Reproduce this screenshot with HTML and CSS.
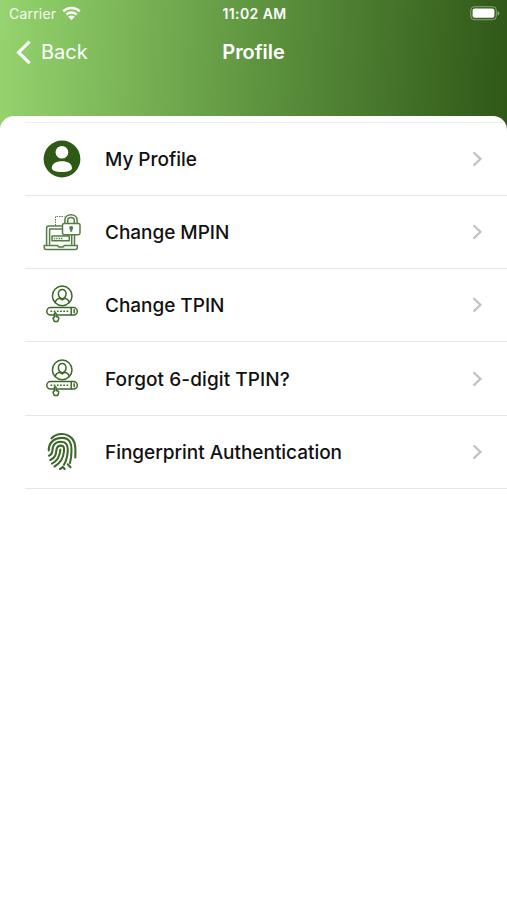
FILE: index.html
```html
<!DOCTYPE html>
<html lang="en">
<head>
<meta charset="utf-8">
<meta name="viewport" content="width=device-width, initial-scale=1">
<title>Profile</title>
<link rel="stylesheet" href="styles.css">
</head>
<body>
<svg width="0" height="0" class="defs" aria-hidden="true">
  <symbol id="tpin" viewBox="0 0 52 52">
    <g fill="none" stroke="currentColor" stroke-width="1.500" stroke-linecap="round" stroke-linejoin="round">
      <circle cx="26.200" cy="16.900" r="9.800"/>
      <path d="M22.400 15.500c-.8-6.600 8.400-6.600 7.600 0-.5 2.600-1.700 4.200-3.800 4.200s-3.300-1.600-3.800-4.200zM19.200 23.600c.4-2.500 2-3.700 4.600-4.300l2.400 1.600 2.400-1.600c2.600.6 4.200 1.800 4.600 4.300"/>
      <rect x="10.800" y="28.600" width="30.500" height="7.400" rx="3.700"/>
      <path d="M35.200 28.800v7M38.200 30.800v3"/>
      <path d="M18.300 42.600l-1.300-3.500 1.300-1v-3.300c0-1.300 1.800-1.300 1.800 0v2.700l1.800.5c.8.300 1 .9.800 1.700l-1 2.900z" fill="#fff"/>
    </g>
    <path d="M14.500 32.300h18.500" fill="none" stroke="currentColor" stroke-width="1.600" stroke-dasharray="1.700 1.500"/>
  </symbol>
</svg>
<main class="screen">
  <header class="header">
    <div class="status">
      <div class="carrier"><span>Carrier</span>
        <svg class="wifi" viewBox="0 0 20 15" fill="none" stroke="#fff" stroke-width="2.600"><path d="M1.300 5.200c4.900-4.600 12.500-4.600 17.400 0M4.500 8.600c3.100-3 7.900-3 11 0"/><path d="M6.500 10.900c2-1.800 5-1.800 7 0L10 14.500z" fill="#fff" stroke="none"/></svg>
      </div>
      <div class="time">11:02 AM</div>
      <svg class="battery" viewBox="0 0 30 15"><rect x=".8" y=".7" width="25.500" height="13" rx="3.500" fill="none" stroke="#fff" stroke-opacity=".42"/><rect x="2.600" y="2.600" width="21.800" height="9.200" rx="2" fill="#fff"/><path d="M27.600 5v4.600c2.300-.8 2.300-3.800 0-4.600z" fill="#fff" fill-opacity=".45"/></svg>
    </div>
    <nav class="nav">
      <div class="back"><svg viewBox="0 0 16 25" fill="none" stroke="#fff" stroke-width="3.100"><path d="M13.600 1.600 2.600 12.400l11 10.800"/></svg><span>Back</span></div>
      <h1>Profile</h1>
    </nav>
  </header>
  <section class="sheet">
    <ul class="menu">
      <li>
        <svg class="icon" viewBox="0 0 52 52"><circle cx="26" cy="26" r="18.400" fill="#2f5a16"/><circle cx="25.900" cy="19.200" r="6.300" fill="#fff"/><path d="M15.800 35.300c0-4.600 4.200-7 10.100-7S36 30.700 36 35.300c0 2.200-4.500 3.800-10.100 3.800s-10.100-1.600-10.100-3.800z" fill="#fff"/></svg>
        <span>My Profile</span><svg class="chevron" viewBox="0 0 10 16"><path d="m1.500 1.200 7 6.700-7 6.700"/></svg>
      </li>
      <li>
        <svg class="icon mpin" viewBox="0 0 52 52" fill="none" stroke="currentColor" stroke-width="1.500" stroke-linejoin="round">
          <path d="M19.500 19.500v-9h9" stroke-width="1" stroke-dasharray="1.500 1"/>
          <path d="M10.600 39V22.300c0-1.500.8-2.300 2.300-2.300h13.300M38.500 28.800V39M13.600 38.800V23h12.600M35.700 28.800v10"/>
          <path d="M8.200 39.500h13.500c.3 1.200 1 1.600 2 1.600h2.500c1 0 1.700-.4 2-1.600h13.100v2.300c0 1-.8 1.700-1.800 1.700H10c-1 0-1.800-.7-1.800-1.700z"/>
          <rect x="16" y="30" width="17.300" height="4.800"/>
          <path d="M17.800 32.400h9" stroke-dasharray="1.400 1"/>
          <path d="M28.900 17v-2.500c0-7.700 12.200-7.700 12.200 0V17M31.700 17v-2.500c0-4 6.600-4 6.600 0V17"/>
          <rect x="26.500" y="17.400" width="17.500" height="11.300" rx="1.700" fill="#fff"/>
          <path d="M35.200 23v2.800" stroke-width="2"/><circle cx="35.200" cy="22" r="1.300" fill="currentColor"/>
        </svg>
        <span>Change MPIN</span><svg class="chevron" viewBox="0 0 10 16"><path d="m1.500 1.200 7 6.700-7 6.700"/></svg>
      </li>
      <li>
        <svg class="icon"><use href="#tpin"/></svg>
        <span>Change TPIN</span><svg class="chevron" viewBox="0 0 10 16"><path d="m1.500 1.200 7 6.700-7 6.700"/></svg>
      </li>
      <li>
        <svg class="icon"><use href="#tpin"/></svg>
        <span class="wide">Forgot 6-digit TPIN?</span><svg class="chevron" viewBox="0 0 10 16"><path d="m1.500 1.200 7 6.700-7 6.700"/></svg>
      </li>
      <li>
        <svg class="icon" viewBox="0 0 52 52" fill="none" stroke="currentColor" stroke-width="2.100" stroke-linecap="round">
          <path d="M15.500 12.300C21 6.500 31 6.500 36.500 13c3 4 3.100 8.500 2.800 18.500"/>
          <path d="M12.800 24.500C12.500 17 18 11.900 26 11.900S35.600 18 35.500 24c0 5-.4 9-1.500 13"/>
          <path d="M13 29.700c4.500-1.500 3-5.700 4-8.700 1-3.500 4.500-5.200 8.500-5.200 4.500 0 6.500 3.200 6.300 8.200-.2 6-1.300 10.500-3.800 14.800"/>
          <path d="M14.300 34c5.700-2.500 5.700-6.500 6.200-10.500.5-2.800 2.500-3.900 4.500-3.900 2.700 0 3.300 1.900 3 5.400-.5 7-3.500 12-9.500 15.500"/>
          <path d="M16 37.600c6-3.100 8-8.100 8.400-14.100M31.800 38.300l2.700 3M24 43c1-.6 1.900-1.300 2.700-2.100l2 2"/>
        </svg>
        <span>Fingerprint Authentication</span><svg class="chevron" viewBox="0 0 10 16"><path d="m1.500 1.200 7 6.700-7 6.700"/></svg>
      </li>
    </ul>
  </section>
</main>
</body>
</html>
```
FILE: styles.css
```css
* { box-sizing: border-box; }
body { margin: 0; font-family: Inter, "Liberation Sans", sans-serif; background: #fff; }
.defs { display: block; height: 0; }
.screen {
  height: 900px;
  overflow: hidden;
  background: linear-gradient(93deg, #95d46e 0%, #5e943f 51%, #2f5717 100%) no-repeat 0 0 / 100% 135px;
}
.header { height: 115.500px; color: #fff; }
.status {
  display: grid;
  grid-template-columns: 1fr auto 1fr;
  align-items: center;
  height: 27px;
  padding: 0 7px 0 9px;
}
.carrier { display: flex; align-items: center; gap: 6px; font-size: 14px; letter-spacing: .2px; opacity: .93; }
.wifi { width: 19px; height: 15px; }
.time { font-size: 14px; font-weight: 600; letter-spacing: .4px; }
.battery { width: 30px; height: 15px; justify-self: end; }
.nav {
  display: grid;
  grid-template-columns: 1fr auto 1fr;
  align-items: center;
  height: 50px;
  padding: 0 16px;
}
.back { display: flex; align-items: center; gap: 9px; font-size: 20px; }
.back svg { width: 16px; height: 25px; }
h1 { margin: 0; font-size: 20px; font-weight: 600; letter-spacing: -.05px; }
.sheet { height: 785px; padding: 6px 0 0 25px; overflow: hidden; background: #fff; border-radius: 14px 14px 0 0; }
.menu { margin: 0; padding: 0; list-style: none; border-top: 1px solid #efefef; }
.menu li {
  display: flex;
  align-items: center;
  height: 73.300px;
  padding: 0 25px 0 11px;
  border-bottom: 1px solid #e8e8e8;
  color: #111;
  font-size: 19px;
  font-weight: 500;
  letter-spacing: -.03px;
}
.menu span { flex: 1; margin-left: 17px; padding-top: 1px; }
.menu .wide { letter-spacing: .08px; }
.icon { width: 52px; height: 52px; color: #3d6829; }
.mpin { color: #557c44; }
.chevron { width: 10px; height: 16px; fill: none; stroke: #c2c2c5; stroke-width: 2.200; }
```
